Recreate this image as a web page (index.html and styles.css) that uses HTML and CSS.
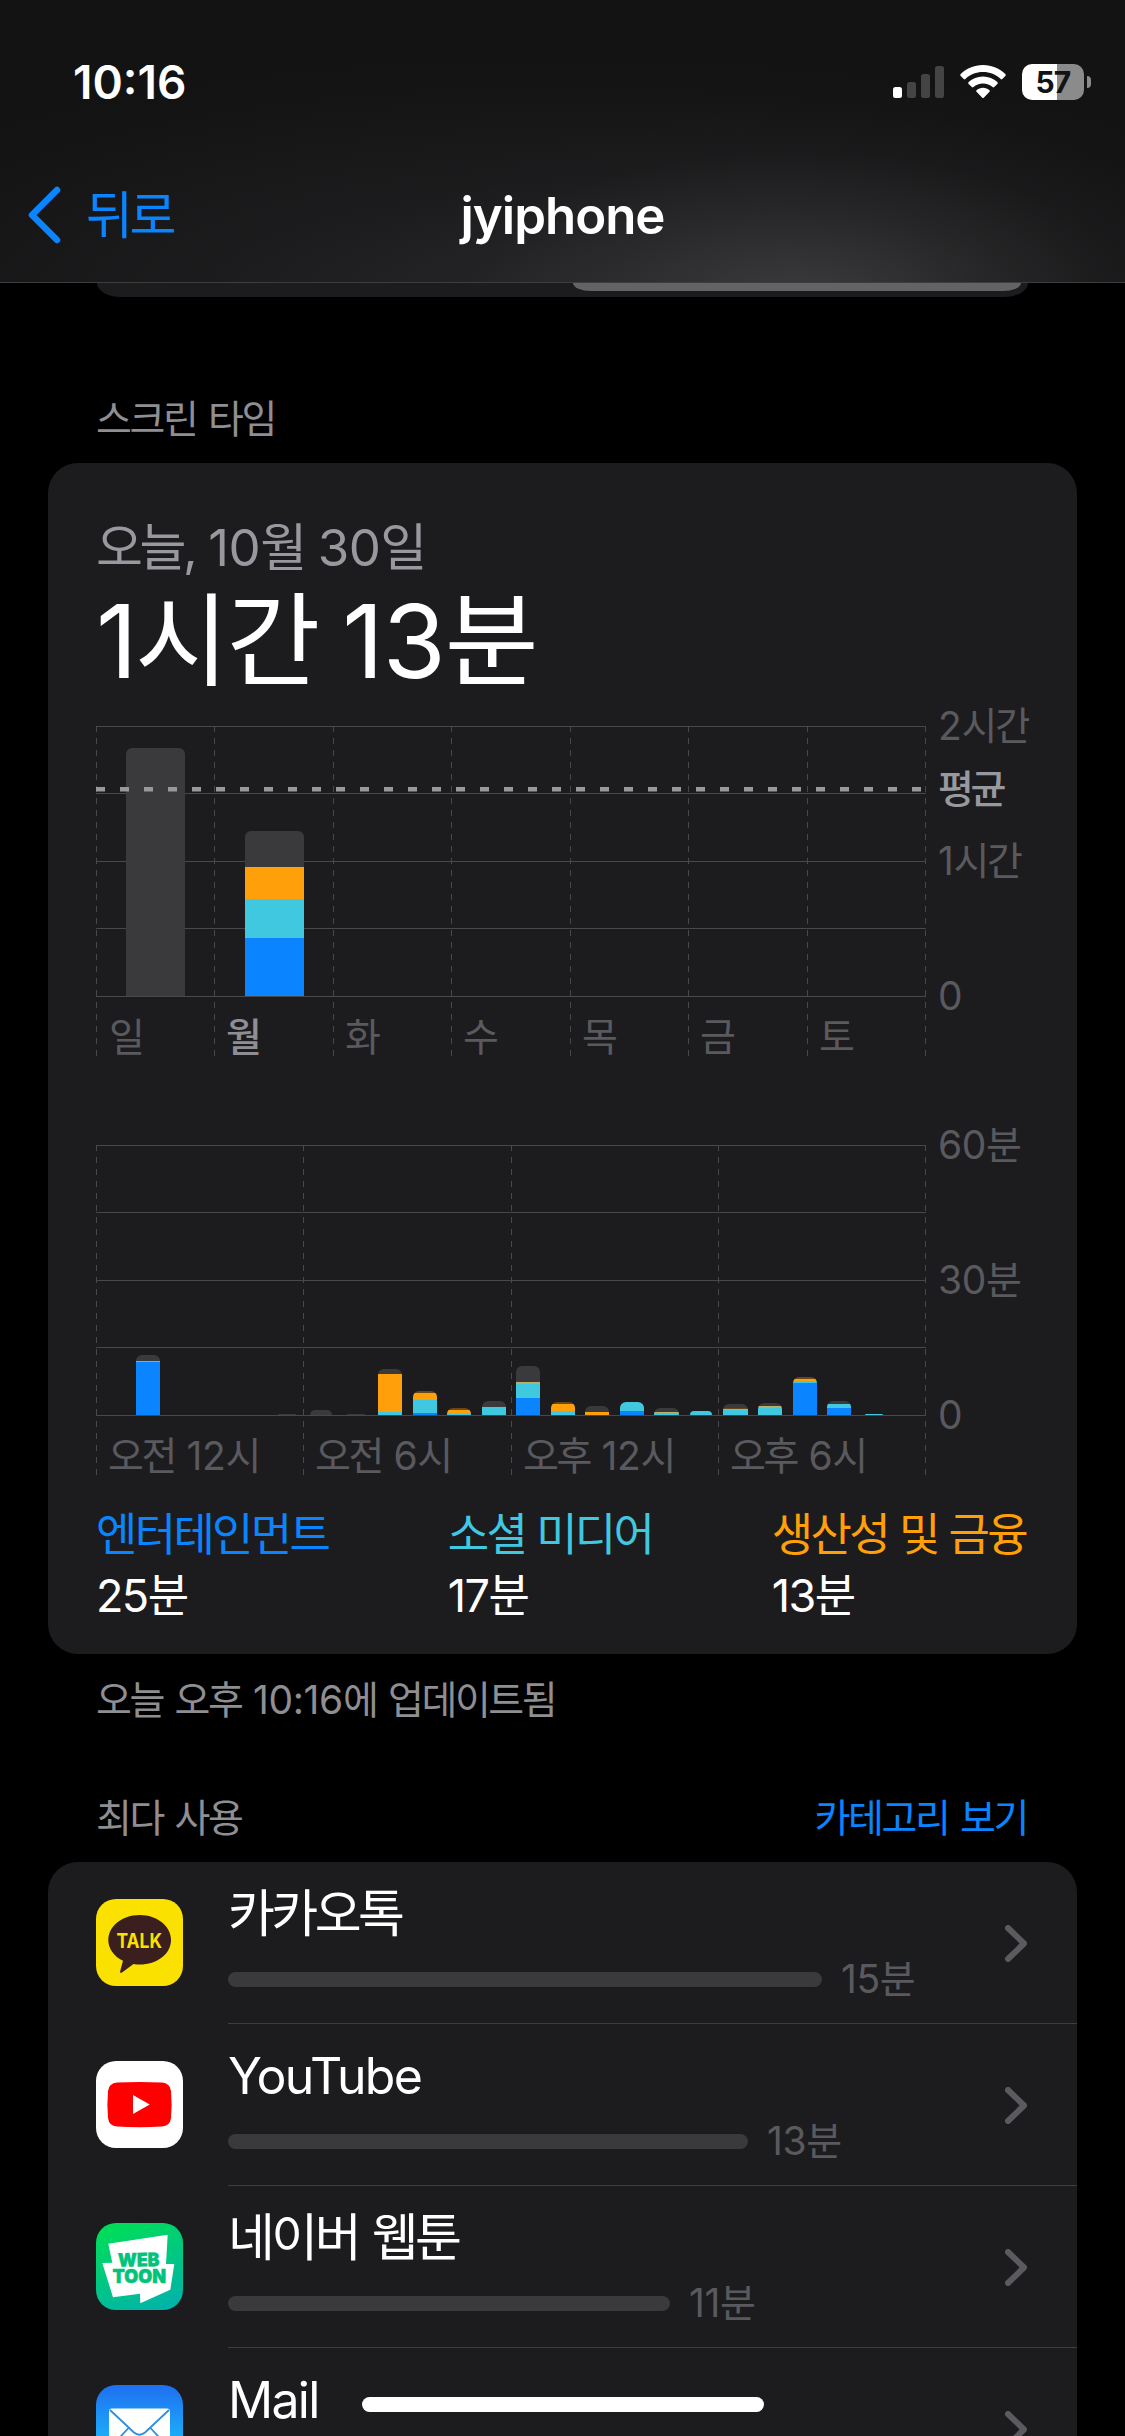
FILE: index.html
```html
<!DOCTYPE html>
<html lang="ko">
<head>
  <meta charset="UTF-8">
  <meta name="viewport" content="width=device-width, initial-scale=1.0">
  <title>스크린 타임</title>
  <link rel="stylesheet" href="styles.css">
</head>
<body>
  <header class="header">
    <div class="status-bar">
      <span class="clock">10:16</span>
      <div class="status-icons">
        <svg class="signal" width="51" height="32" viewBox="0 0 51 32">
          <rect x="0" y="21" width="9" height="11" rx="2.5" fill="#fff"/>
          <rect x="14" y="16" width="9" height="16" rx="2.5" fill="#444445"/>
          <rect x="28" y="8" width="9" height="24" rx="2.5" fill="#444445"/>
          <rect x="42" y="0" width="9" height="32" rx="2.5" fill="#444445"/>
        </svg>
        <svg class="wifi" width="46" height="34" viewBox="0 0 46 34">
          <path fill="#fff" d="M23 0C31.900 0 39.700 3.500 45.300 9Q46.200 10 45.300 11L42.300 14Q41.500 14.800 40.600 14C36 9.700 29.800 7.100 23 7.100S10 9.700 5.400 14Q4.500 14.800 3.700 14L.7 11Q-.2 10 .7 9C6.300 3.500 14.100 0 23 0Z"/>
          <path fill="#fff" d="M23 11.500C28.600 11.500 33.600 13.600 37.400 17.100Q38.300 18 37.400 18.900L34.200 22Q33.400 22.800 32.500 22C30 19.800 26.700 18.500 23 18.500S16 19.800 13.500 22Q12.600 22.800 11.800 22L8.600 18.900Q7.700 18 8.600 17.100C12.400 13.600 17.400 11.500 23 11.500Z"/>
          <path fill="#fff" d="M23 22.800C25.500 22.800 27.800 23.700 29.500 25.200Q30.300 26 29.500 26.800L24 32.400Q23 33.400 22 32.400L16.500 26.800Q15.700 26 16.500 25.200C18.200 23.700 20.500 22.800 23 22.800Z"/>
        </svg>
        <div class="battery"><span>57</span></div>
      </div>
    </div>
    <nav class="nav-bar">
      <a class="back">
        <svg width="34" height="58" viewBox="0 0 34 58">
          <path d="M30 4L5 29L30 54" fill="none" stroke="#0a84ff" stroke-width="6.500" stroke-linecap="round" stroke-linejoin="round"/>
        </svg>
        <span>뒤로</span>
      </a>
      <h1>jyiphone</h1>
    </nav>
  </header>

  <main>
    <div class="segmented"><div class="segment"></div></div>

    <h2 class="section-title">스크린 타임</h2>

    <section class="card usage">
      <p class="date">오늘, <span class="num">10</span>월 <span class="num">30</span>일</p>
      <p class="total">1시간 <span class="num">13</span>분</p>
      <svg id="weekChart" class="chart" width="933" height="360"></svg>
      <svg id="dayChart" class="chart day" width="933" height="360"></svg>
      <div class="legend">
        <div class="blue"><p>엔터테인먼트</p><strong><span class="num">25</span>분</strong></div>
        <div class="cyan"><p>소셜 미디어</p><strong><span class="num">17</span>분</strong></div>
        <div class="orange"><p>생산성 및 금융</p><strong><span class="num">13</span>분</strong></div>
      </div>
    </section>
    <p class="updated">오늘 오후 <span class="num">10:16</span>에 업데이트됨</p>

    <div class="list-header">
      <h2>최다 사용</h2>
      <a>카테고리 보기</a>
    </div>

    <section class="card apps">
      <div class="app">
        <svg class="icon" width="87" height="87" viewBox="0 0 87 87">
          <rect width="87" height="87" rx="20" fill="#fae100"/>
          <path d="M43.700 16C61 16 75 27 75 41S61 65.500 43.700 65.500Q40.500 65.500 37.500 65L26 73.500Q23.800 74.800 24.200 72L27 61.800C18 57.400 12.300 49.800 12.300 41C12.300 27 26.400 16 43.700 16Z" fill="#3b1e1e"/>
          <text class="talk" x="20.500" y="48.500" textLength="45.500" lengthAdjust="spacingAndGlyphs">TALK</text>
        </svg>
        <div class="info">
          <p class="name">카카오톡</p>
          <div class="time"><i style="width: 594px"></i><span><span class="num">15</span>분</span></div>
        </div>
        <svg class="chevron" width="22" height="37" viewBox="0 0 22 37"><path d="M3 3L19 18.500L3 34"/></svg>
      </div>
      <div class="app">
        <svg class="icon" width="87" height="87" viewBox="0 0 87 87">
          <rect width="87" height="87" rx="20" fill="#fff"/>
          <path d="M21 21.600Q43.500 20.200 66 21.600Q74 22.200 75 30Q76.200 43.500 75 57Q74 65 66 65.600Q43.500 67 21 65.600Q13 65 12 57Q10.800 43.500 12 30Q13 22.200 21 21.600Z" fill="#f00"/>
          <path d="M37 34L53.700 43.500L37 53Z" fill="#fff"/>
        </svg>
        <div class="info">
          <p class="name latin">YouTube</p>
          <div class="time"><i style="width: 520px"></i><span><span class="num">13</span>분</span></div>
        </div>
        <svg class="chevron" width="22" height="37" viewBox="0 0 22 37"><path d="M3 3L19 18.500L3 34"/></svg>
      </div>
      <div class="app">
        <svg class="icon" width="87" height="87" viewBox="0 0 87 87">
          <defs>
            <linearGradient id="toonBg" x1=".3" y1="0" x2=".7" y2="1">
              <stop offset="0" stop-color="#00dc5a"/>
              <stop offset="1" stop-color="#00b4a8"/>
            </linearGradient>
          </defs>
          <rect width="87" height="87" rx="20" fill="url(#toonBg)"/>
          <path d="M12.300 20.700L71.700 11.700L70 41H78.300L74.300 66.700L44.300 80.300L44 70.700L17 74.300L6.300 40L16.300 39.700Z" fill="#fff"/>
          <text class="toon" x="22" y="43.500" textLength="41.500" lengthAdjust="spacingAndGlyphs" transform="rotate(-1 43 40)">WEB</text>
          <text class="toon" x="16.500" y="59.500" textLength="53.500" lengthAdjust="spacingAndGlyphs">TOON</text>
        </svg>
        <div class="info">
          <p class="name">네이버 웹툰</p>
          <div class="time"><i style="width: 442px"></i><span><span class="num">11</span>분</span></div>
        </div>
        <svg class="chevron" width="22" height="37" viewBox="0 0 22 37"><path d="M3 3L19 18.500L3 34"/></svg>
      </div>
      <div class="app">
        <svg class="icon" width="87" height="87" viewBox="0 0 87 87">
          <defs>
            <linearGradient id="mailBg" x1="0" y1="0" x2="0" y2="1">
              <stop offset="0" stop-color="#1f6ff0"/>
              <stop offset="1" stop-color="#1ad5fd"/>
            </linearGradient>
          </defs>
          <rect width="87" height="87" rx="20" fill="url(#mailBg)"/>
          <rect x="13" y="23.500" width="61" height="41" rx="3" fill="#fff"/>
          <path d="M14 25L38 47.500Q43.500 52 49 47.500L73 25M14 63L32.500 43M73 63L54.500 43" fill="none" stroke="#2e8ee0" stroke-width="1.800"/>
        </svg>
        <div class="info">
          <p class="name latin">Mail</p>
        </div>
        <svg class="chevron" width="22" height="37" viewBox="0 0 22 37"><path d="M3 3L19 18.500L3 34"/></svg>
      </div>
    </section>
  </main>

  <div class="home-indicator"></div>

  <script>
    const GRAY = '#3a3a3c', ORANGE = '#ff9f0a', CYAN = '#40c8e0', BLUE = '#0a84ff';
    const TAN = '#b3b06c', BROWN = '#6b4716';
    const TOP = 24, BOTTOM = 294;

    // 막대: [x, 너비, [높이, 색], ...] 아래에서 위로
    const week = [
      [30, 59, [248, GRAY]],
      [149, 59, [58, BLUE], [39, CYAN], [32, ORANGE], [36, GRAY]]
    ];
    const day = [
      [40, 24, [53, BLUE], [1, CYAN], [6, GRAY]],
      [182, 18, [1, GRAY]],
      [214, 22, [5, GRAY]],
      [251, 18, [1, GRAY]],
      [282, 24, [3, CYAN], [38, ORANGE], [5, GRAY]],
      [317, 24, [2, BLUE], [13, CYAN], [1, TAN], [6, ORANGE], [2, BROWN]],
      [351, 24, [1, CYAN], [1, TAN], [3, ORANGE], [2, BROWN]],
      [386, 24, [8, CYAN], [6, GRAY]],
      [420, 24, [17, BLUE], [14, CYAN], [2, TAN], [16, GRAY]],
      [455, 24, [4, CYAN], [7, ORANGE], [2, BROWN]],
      [489, 24, [3, ORANGE], [6, GRAY]],
      [524, 24, [4, BLUE], [9, CYAN]],
      [558, 25, [2, CYAN], [1, TAN], [4, GRAY]],
      [594, 22, [4, CYAN]],
      [627, 25, [5, CYAN], [1, ORANGE], [1, BROWN], [4, GRAY]],
      [662, 24, [7, CYAN], [2, TAN], [3, GRAY]],
      [697, 24, [32, BLUE], [2, CYAN], [2, ORANGE], [2, BROWN]],
      [731, 24, [7, BLUE], [4, CYAN], [3, GRAY]],
      [769, 18, [1, CYAN]]
    ];

    function label(text) {
      return text.replace(/\d+/g, n => `<tspan class="num">${n}</tspan>`);
    }

    function drawChart(id, columns, bars, xLabels, yLabels, average) {
      let out = '';
      [0, 67, 135, 202, 270].forEach(y => {
        out += `<rect x="0" y="${TOP + y}" width="830" height="1" fill="#48484a"/>`;
      });
      columns.forEach(x => {
        out += `<path d="M${x + 0.5} ${TOP}v330" stroke="#48484a" stroke-dasharray="6 6"/>`;
      });
      bars.forEach(([x, w, ...parts]) => {
        let y = BOTTOM;
        out += '<g class="stack">';
        parts.forEach(([h, color]) => {
          y -= h;
          out += `<rect x="${x}" y="${y}" width="${w}" height="${h}" fill="${color}"/>`;
        });
        out += '</g>';
      });
      if (average) {
        out += `<path d="M0 ${average}h829" stroke="#98989d" stroke-width="4.500" stroke-dasharray="9 15"/>`;
      }
      xLabels.forEach(([x, text, cls]) => {
        out += `<text x="${x}" y="349" class="${cls || ''}">${label(text)}</text>`;
      });
      yLabels.forEach(([y, text, cls]) => {
        out += `<text x="842" y="${y + 14}" class="${cls || ''}">${label(text)}</text>`;
      });
      document.getElementById(id).innerHTML = out;
    }

    drawChart('weekChart', [0, 118, 237, 355, 474, 592, 711, 829], week,
      [[13, '일'], [130, '월', 'today'], [249, '화'], [367, '수'], [486, '목'], [604, '금'], [723, '토']],
      [[TOP, '2시간'], [87, '평균', 'average'], [159, '1시간'], [BOTTOM, '0']], 87.25);

    drawChart('dayChart', [0, 207, 415, 622, 829], day,
      [[12, '오전 12시'], [219, '오전 6시'], [427, '오후 12시'], [634, '오후 6시']],
      [[TOP, '60분'], [159, '30분'], [BOTTOM, '0']]);
  </script>
</body>
</html>
```
FILE: styles.css
```css
* {
  box-sizing: border-box;
}
html,
body {
  height: 2436px;
  overflow: hidden;
}
body {
  margin: 0;
  width: 1125px;
  background: #000;
  color: #fff;
  font-family: Inter, "Noto Sans CJK KR", sans-serif;
  font-size: 39px;
  letter-spacing: -2.4px;
  word-spacing: 3px;
}
h1, h2, p {
  margin: 0;
  font-weight: 400;
}

/* Header */
.header {
  height: 283px;
  border-bottom: 1px solid #3d3d3f;
  background:
    radial-gradient(ellipse 440px 200px at 800px 300px, rgba(66, 66, 68, 0.8), rgba(56, 56, 58, 0.4) 45%, rgba(40, 40, 42, 0.12) 75%, transparent),
    radial-gradient(ellipse 800px 240px at 560px 300px, rgba(42, 42, 45, 0.8), rgba(36, 36, 38, 0.45) 50%, transparent),
    #131314;
}
.status-bar {
  display: flex;
  justify-content: space-between;
  align-items: center;
  height: 132px;
  padding: 32px 34px 0 73px;
}
.clock {
  font-size: 46px;
  font-weight: 600;
  letter-spacing: 0;
}
.status-icons {
  display: flex;
  align-items: center;
  gap: 16px;
}
.battery {
  position: relative;
  width: 62px;
  height: 36px;
  margin-right: 7px;
  border-radius: 10px;
  background: linear-gradient(to right, #fff 35px, #8b8b8b 35px);
  color: #131314;
  font-size: 30px;
  font-weight: 700;
  line-height: 36px;
  text-align: center;
  letter-spacing: -0.03em;
}
.battery::after {
  content: "";
  position: absolute;
  left: 65px;
  top: 12px;
  width: 4px;
  height: 12px;
  border-radius: 0 5px 5px 0;
  background: #8b8b8b;
}
.nav-bar {
  display: grid;
  grid-template-columns: 1fr auto 1fr;
  align-items: center;
  height: 150px;
  padding: 16px 27px 0;
}
.back {
  display: flex;
  align-items: center;
  gap: 25px;
  color: #0a84ff;
  font-size: 51px;
  line-height: 62px;
  letter-spacing: -3.5px;
}
.back span {
  margin-top: 2px;
}
h1 {
  font-size: 51px;
  font-weight: 600;
  letter-spacing: -0.02em;
}

/* Segmented control under the header */
.segmented {
  height: 14px;
  margin: 0 97px;
  padding: 0 7px 6px 476px;
  border-radius: 0 0 24px 24px / 0 0 14px 14px;
  background: #1c1c1f;
}
.segment {
  height: 8px;
  border-radius: 0 0 18px 18px / 0 0 8px 8px;
  background: #636366;
}

.section-title {
  margin: 92px 0 0 96px;
  color: #8e8e93;
  font-size: 39px;
  line-height: 60px;
}

.card {
  margin: 0 48px;
  border-radius: 30px;
  background: #1c1c1e;
}
.usage {
  height: 1191px;
  margin-top: 14px;
  padding: 54px 48px 0;
}
.date {
  color: #98989f;
  font-size: 51px;
  line-height: 62px;
  letter-spacing: -3.4px;
}
.num {
  letter-spacing: -0.01em;
}
.total {
  margin-top: 1px;
  font-size: 102px;
  line-height: 122px;
  word-spacing: -2px;
}

/* Charts */
.chart {
  display: block;
}
.chart.day {
  margin-top: 59px;
}
.chart text {
  fill: #59595e;
  font-size: 39px;
}
.chart .today {
  fill: #8e8e93;
  font-weight: 500;
}
.chart .average {
  fill: #98989f;
  font-weight: 500;
  letter-spacing: -3.5px;
}
.stack {
  clip-path: inset(0 round 6px 6px 0 0);
}

.legend {
  display: flex;
  justify-content: space-between;
  margin-top: 24px;
  padding-right: 3px;
  font-size: 45px;
  line-height: 60px;
  letter-spacing: -2.7px;
  word-spacing: 1px;
}
.legend strong {
  display: block;
  margin-top: 1px;
  color: #fff;
  font-weight: 400;
}
.legend .num {
  letter-spacing: -0.035em;
}
.blue { color: #0a84ff; }
.cyan { color: #40c8e0; }
.orange { color: #ff9f0a; }

.updated {
  margin: 16px 96px 0;
  color: #8e8e93;
  line-height: 60px;
}
.list-header {
  display: flex;
  justify-content: space-between;
  margin: 58px 98px 14px 96px;
  line-height: 60px;
}
.list-header h2 {
  color: #8e8e93;
  font-size: 39px;
}
.list-header a {
  color: #0a84ff;
}

/* App list */
.app {
  display: flex;
  align-items: center;
  height: 162px;
  padding-left: 48px;
}
.icon {
  margin: 0 45px 1px 0;
}
.info {
  flex: 1;
  height: 162px;
  padding-top: 20px;
  border-bottom: 1px solid #3d3d41;
}
.name {
  font-size: 51px;
  line-height: 64px;
  letter-spacing: -3.6px;
}
.name.latin {
  font-size: 50px;
  letter-spacing: -1.7px;
}
.time {
  display: flex;
  align-items: center;
  gap: 19px;
  height: 66px;
  color: #59595e;
  font-size: 39px;
  line-height: 48px;
}
.time > span {
  margin-top: -1px;
}
.time i {
  height: 15px;
  border-radius: 8px;
  background: #3a3a3c;
}
.chevron {
  margin: 0 50px 0 -72px;
}
.chevron path {
  fill: none;
  stroke: #5a5a5f;
  stroke-width: 6;
  stroke-linecap: round;
  stroke-linejoin: round;
}
.talk {
  fill: #fae100;
  font-size: 19.5px;
  font-weight: 700;
  letter-spacing: 0;
}
.toon {
  fill: #00c37c;
  stroke: #00c37c;
  stroke-width: 0.5;
  font-size: 18.5px;
  font-weight: 900;
  letter-spacing: 0;
}

.home-indicator {
  position: fixed;
  left: 362px;
  top: 2397px;
  width: 402px;
  height: 15px;
  border-radius: 8px;
  background: #fff;
}
```
